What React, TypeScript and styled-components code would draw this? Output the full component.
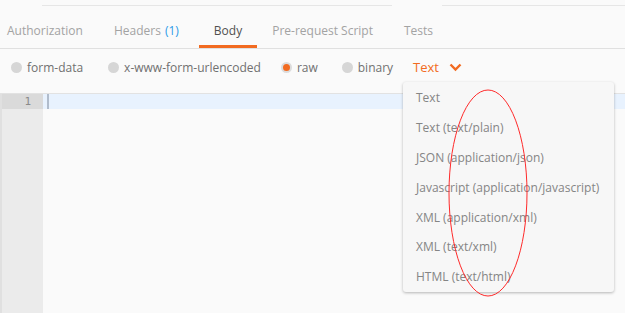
import React, { useState } from "react";
import styled, { createGlobalStyle } from "styled-components";

const GlobalStyle = createGlobalStyle`
  html, body {
    margin: 0;
    padding: 0;
    background: #fafafa;
  }
  body {
    font-family: "Open Sans", "Noto Sans", sans-serif;
    font-size: 12px;
    overflow: hidden;
  }
`;

const Page = styled.div`
  position: relative;
  width: 625px;
  height: 313px;
  overflow: hidden;
`;

const TopRule = styled.div`
  display: flex;
  gap: 50px;
  padding: 5px 0 0 42px;
  height: 1px;
`;

const RuleSegment = styled.div<{ $w?: number }>`
  height: 1px;
  background: #e6e6e6;
  flex: ${(p) => (p.$w ? `0 0 ${p.$w}px` : "1")};
`;

const TabBar = styled.div`
  display: flex;
  height: 37px;
  margin-top: 5px;
  border-bottom: 1px solid #e0e0e0;
`;

const Tab = styled.div<{ $active?: boolean; $pad: number }>`
  display: flex;
  align-items: center;
  padding: 4px ${(p) => p.$pad}px 0;
  color: ${(p) => (p.$active ? "#505050" : "#a3a3a3")};
  border-bottom: 3px solid ${(p) => (p.$active ? "#f26b21" : "transparent")};
  white-space: nowrap;
`;

const Count = styled.span`
  color: #2d9ae8;
  margin-left: 4px;
`;

const ModeRow = styled.div`
  display: flex;
  align-items: center;
  height: 36px;
  margin-bottom: 8px;
  padding-left: 11px;
`;

const RadioItem = styled.label<{ $gap: number }>`
  display: flex;
  align-items: center;
  gap: 5px;
  margin-right: ${(p) => p.$gap}px;
  color: #707070;
  cursor: pointer;
`;

const RadioDot = styled.span<{ $on?: boolean }>`
  width: 11px;
  height: 11px;
  border-radius: 50%;
  box-sizing: border-box;
  background: ${(p) => (p.$on ? "#f26b21" : "#d6d6d6")};
  border: ${(p) => (p.$on ? "2px solid #dcdcdc" : "none")};
`;

const TypeButton = styled.div`
  display: flex;
  align-items: center;
  gap: 10px;
  margin-left: 6px;
  color: #f26b21;
  font-size: 13px;
`;

const Editor = styled.div`
  display: flex;
  flex-direction: column;
  height: 220px;
  border-top: 1px solid #e2e2e2;
`;

const LineRow = styled.div<{ $active?: boolean }>`
  display: flex;
  height: 15px;
  background: ${(p) => (p.$active ? "#e8f2fe" : "transparent")};
`;

const Gutter = styled.div<{ $active?: boolean }>`
  width: 43px;
  border-left: 2px solid #e0e0e0;
  background: ${(p) => (p.$active ? "#dadada" : "#ebebeb")};
  color: #8a8a8a;
  font-family: "DejaVu Sans Mono", monospace;
  font-size: 11px;
  text-align: right;
  padding-right: 12px;
  box-sizing: border-box;
  line-height: 15px;
  flex: 0 0 auto;
`;

const FillRow = styled.div`
  display: flex;
  flex: 1;
`;

const Cursor = styled.div`
  width: 2px;
  height: 15px;
  margin-left: 4px;
  background: #b0bccc;
`;

const Menu = styled.div`
  position: absolute;
  left: 403px;
  top: 82px;
  width: 211px;
  height: 210px;
  background: #f7f7f7;
  border-radius: 3px;
  box-shadow: 0 1px 3px rgba(0, 0, 0, 0.28);
  padding-top: 1px;
  box-sizing: border-box;
`;

const MenuItem = styled.div`
  height: 29.8px;
  display: flex;
  align-items: center;
  padding-left: 13px;
  color: #858585;
  white-space: nowrap;
`;

const Ellipse = styled.svg`
  position: absolute;
  left: 440px;
  top: 84px;
  pointer-events: none;
`;

const tabs = [
  { label: "Authorization", pad: 0, left: 7 },
  { label: "Headers", pad: 0, left: 31, count: "(1)" },
  { label: "Body", pad: 15, left: 20, active: true },
  { label: "Pre-request Script", pad: 0, left: 15 },
  { label: "Tests", pad: 0, left: 31 },
];

const modes = [
  { label: "form-data", gap: 25 },
  { label: "x-www-form-urlencoded", gap: 20 },
  { label: "raw", gap: 24 },
  { label: "binary", gap: 14 },
];

const types = [
  "Text",
  "Text (text/plain)",
  "JSON (application/json)",
  "Javascript (application/javascript)",
  "XML (application/xml)",
  "XML (text/xml)",
  "HTML (text/html)",
];

export default function App() {
  const [mode, setMode] = useState("raw");

  return (
    <Page>
      <GlobalStyle />
      <TopRule>
        <RuleSegment $w={350} />
        <RuleSegment />
      </TopRule>
      <TabBar>
        {tabs.map((t) => (
          <Tab
            key={t.label}
            $active={t.active}
            $pad={t.pad}
            style={{ marginLeft: t.left }}
          >
            {t.label}
            {t.count && <Count>{t.count}</Count>}
          </Tab>
        ))}
      </TabBar>
      <ModeRow>
        {modes.map((m) => (
          <RadioItem key={m.label} $gap={m.gap} onClick={() => setMode(m.label)}>
            <RadioDot $on={mode === m.label} />
            {m.label}
          </RadioItem>
        ))}
        <TypeButton>
          Text
          <svg width="13" height="9" viewBox="0 0 13 9">
            <path
              d="M1.5 1.5 L6.5 6.5 L11.5 1.5"
              fill="none"
              stroke="#f26b21"
              strokeWidth="2.4"
            />
          </svg>
        </TypeButton>
      </ModeRow>
      <Editor>
        <LineRow $active>
          <Gutter $active>1</Gutter>
          <Cursor />
        </LineRow>
        <FillRow>
          <Gutter />
        </FillRow>
      </Editor>
      <Menu>
        {types.map((t) => (
          <MenuItem key={t}>{t}</MenuItem>
        ))}
      </Menu>
      <Ellipse width="100" height="220" viewBox="0 0 100 220">
        <ellipse
          cx="48"
          cy="109"
          rx="39"
          ry="103"
          fill="none"
          stroke="#ff2a2a"
          strokeWidth="1"
        />
      </Ellipse>
    </Page>
  );
}
